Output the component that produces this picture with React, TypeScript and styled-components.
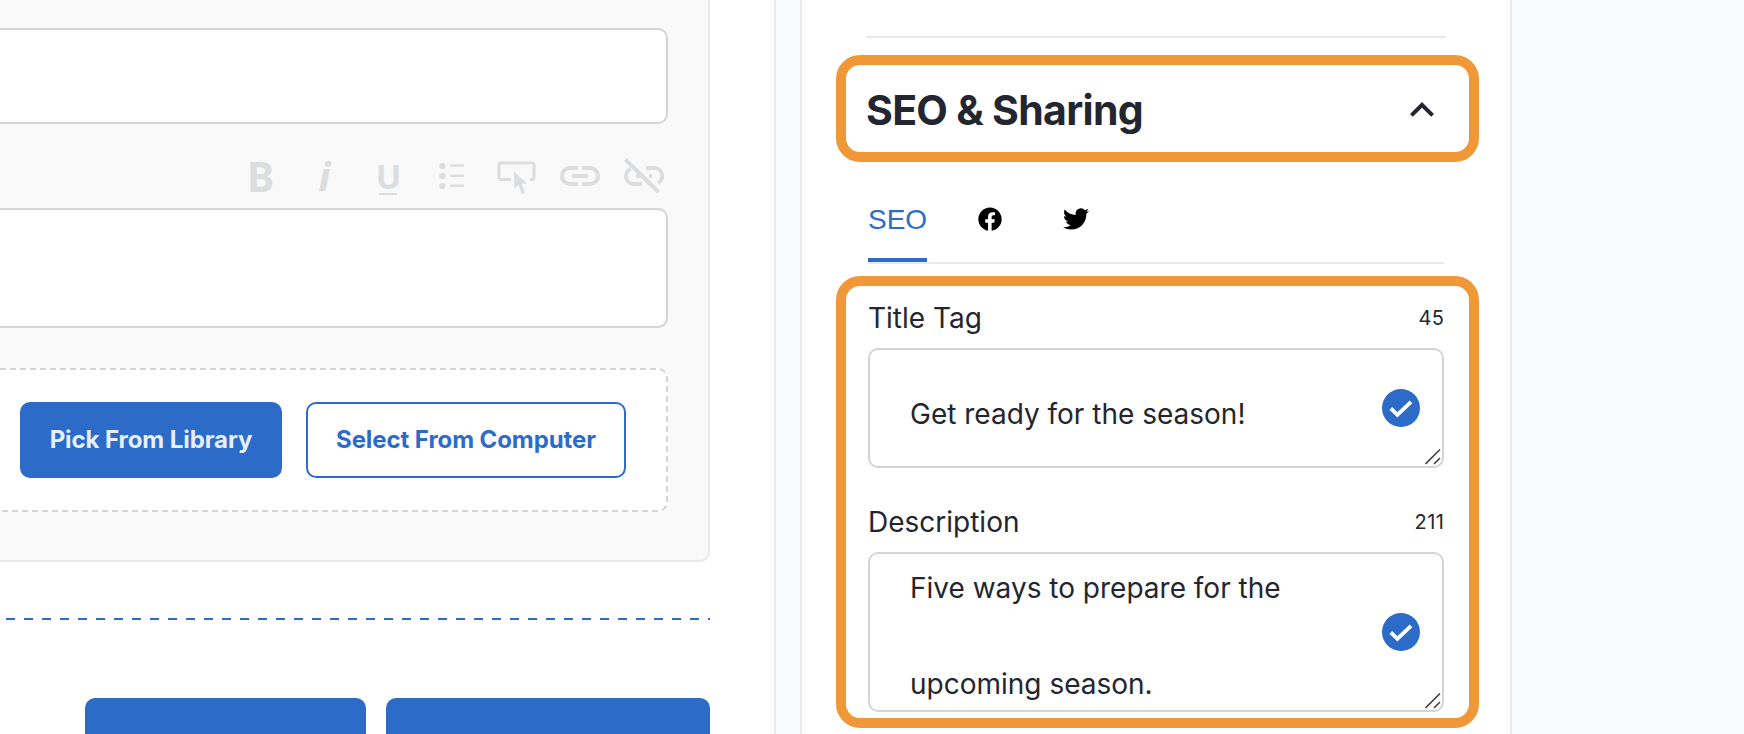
import type { ReactNode } from "react";
import styled, { createGlobalStyle } from "styled-components";

const blue = "#2d6bc9";
const ink = "#23262f";
const line = "#e9e9e9";
const border = "#d4d4d4";

const GlobalStyle = createGlobalStyle`
  * {
    box-sizing: border-box;
  }
  body {
    margin: 0;
    overflow: hidden;
    background: #fafbfd;
    color: ${ink};
    font-family: Inter, "Liberation Sans", sans-serif;
  }
`;

const Page = styled.div`
  display: flex;
  gap: 24px;
  width: 1744px;
  height: 734px;
  overflow: hidden;
`;

const EditorColumn = styled.main`
  flex: none;
  width: 776px;
  padding-right: 64px;
  background: #fff;
  border-right: 2px solid ${line};
`;

const BlockCard = styled.section`
  height: 562px;
  padding: 28px 40px 0 0;
  background: #f9f9f9;
  border: solid ${line};
  border-width: 0 2px 2px 0;
  border-bottom-right-radius: 10px;
`;

const Field = styled.div<{ $height: number }>`
  height: ${({ $height }) => $height}px;
  background: #fff;
  border: 2px solid ${border};
  border-left: 0;
  border-radius: 0 10px 10px 0;
`;

const Toolbar = styled.div`
  display: flex;
  align-items: center;
  justify-content: flex-end;
  gap: 24px;
  height: 84px;
  padding: 20px 4px 0 0;
  color: #dcdddf;
`;

const ToolButton = styled.span`
  display: flex;
  align-items: center;
  justify-content: center;
  width: 40px;
  height: 44px;
`;

const ToolLetter = styled(ToolButton)<{ $size: number; $italic?: boolean }>`
  padding-left: 1px;
  font-family: "Open Sans", sans-serif;
  font-size: ${({ $size }) => $size}px;
  font-style: ${({ $italic }) => ($italic ? "italic" : "normal")};
  font-weight: 700;
  line-height: 42px;
`;

const UnderlineLetter = styled.span`
  height: 37px;
  line-height: 36px;
  margin-top: 1px;
  background: linear-gradient(currentColor, currentColor) center bottom / 18px 2px no-repeat;
`;

const DropZone = styled.div`
  display: flex;
  gap: 24px;
  height: 144px;
  margin-top: 40px;
  padding: 32px 0 0 20px;
  background: #fff;
  border: 2px dashed ${border};
  border-left: 0;
  border-radius: 0 10px 10px 0;
`;

const Button = styled.button<{ $width: number; $outline?: boolean }>`
  flex: none;
  width: ${({ $width }) => $width}px;
  height: 76px;
  padding: 0 0 2px;
  border: 2px solid ${blue};
  border-radius: 10px;
  background: ${({ $outline }) => ($outline ? "#fff" : blue)};
  color: ${({ $outline }) => ($outline ? blue : "#e6effb")};
  font: 700 24px Inter, sans-serif;
  letter-spacing: -0.08px;
  white-space: nowrap;
`;

const DashedRule = styled.div`
  width: 710px;
  height: 2px;
  margin-top: 56px;
  background: repeating-linear-gradient(to right, transparent 0 6px, ${blue} 6px 15px, transparent 15px 18px);
`;

const Actions = styled.div`
  display: flex;
  justify-content: flex-end;
  gap: 20px;
  width: 710px;
  margin-top: 78px;
`;

const Sidebar = styled.aside`
  flex: none;
  width: 712px;
  padding: 36px 31px 0 34px;
  background: #fff;
  border: solid ${line};
  border-width: 0 2px;
`;

const Divider = styled.hr`
  height: 2px;
  margin: 0 33px 17px 30px;
  border: 0;
  background: ${line};
`;

const Highlight = styled.section<{ $height: number }>`
  height: ${({ $height }) => $height}px;
  border: 10px solid #f09837;
  border-radius: 24px;
`;

const PanelHeader = styled.div`
  display: flex;
  align-items: center;
  justify-content: space-between;
  height: 87px;
  padding: 2px 23px 0 20px;
`;

const PanelTitle = styled.h2`
  margin: 0;
  font-size: 41px;
  font-weight: 700;
  letter-spacing: -0.7px;
  line-height: 50px;
  white-space: nowrap;
`;

const Tabs = styled.nav`
  display: flex;
  height: 69px;
  margin: 33px 35px 12px 32px;
  border-bottom: 2px solid ${line};
`;

const Tab = styled.a<{ $active?: boolean }>`
  display: flex;
  justify-content: center;
  height: 67px;
  padding-top: 9px;
  border-bottom: 4px solid ${({ $active }) => ($active ? blue : "transparent")};
  color: ${({ $active }) => ($active ? blue : "#000")};
  font: 28px/32px "Liberation Sans", Arial, sans-serif;

  & + & {
    margin-left: 49px;
    padding-top: 10px;
  }
  & + & + & {
    margin-left: 59px;
    padding-top: 11px;
  }
`;

const SeoFields = styled.div`
  padding: 0 25px 0 22px;
`;

const FieldHead = styled.div`
  display: flex;
  align-items: center;
  justify-content: space-between;
  height: 62px;
  padding-top: 2px;
  font-size: 28px;
`;

const Counter = styled.span`
  margin-right: -0.5px;
  font-size: 20px;
  letter-spacing: 0.5px;
`;

const TextBox = styled.div<{ $height: number }>`
  position: relative;
  height: ${({ $height }) => $height}px;
  margin-bottom: 22px;
  padding-left: 40px;
  overflow: hidden;
  border: 2px solid ${border};
  border-radius: 10px;
  font-size: 28px;
  line-height: 96px;
`;

const TextValue = styled.p<{ $shift: number }>`
  width: 400px;
  margin: ${({ $shift }) => $shift}px 0 0;
`;

const CheckBadge = styled.svg`
  position: absolute;
  right: 22px;
  top: calc(50% - 19px);
`;

const ResizeGrip = styled.svg`
  position: absolute;
  right: 1px;
  bottom: 1px;
`;

function ToolIcon({ children }: { children: ReactNode }) {
  return (
    <ToolButton>
      <svg width="40" height="44" viewBox="0 0 40 44" fill="none" stroke="currentColor">
        {children}
      </svg>
    </ToolButton>
  );
}

function SeoTextBox({ height, shift, value }: { height: number; shift: number; value: string }) {
  return (
    <TextBox $height={height}>
      <TextValue $shift={shift}>{value}</TextValue>
      <CheckBadge width="38" height="38" viewBox="0 0 38 38">
        <circle cx="19" cy="19" r="19" fill={blue} />
        <path d="M8.8 19.4L15.4 25.8L29 12.9" fill="none" stroke="#fff" strokeWidth="3.9" />
      </CheckBadge>
      <ResizeGrip width="16" height="16" viewBox="0 0 16 16" stroke="#444" strokeWidth="1.6">
        <path d="M.5 15L15 .5M9 15l6-6" />
      </ResizeGrip>
    </TextBox>
  );
}

function App() {
  return (
    <>
      <GlobalStyle />
      <Page>
        <EditorColumn>
          <BlockCard>
            <Field $height={96} />
            <Toolbar>
              <ToolLetter $size={41}>B</ToolLetter>
              <ToolLetter $size={40} $italic>
                i
              </ToolLetter>
              <ToolLetter $size={34}>
                <UnderlineLetter>U</UnderlineLetter>
              </ToolLetter>
              <ToolIcon>
                <g fill="currentColor" stroke="none">
                  <circle cx="10.5" cy="12" r="3.1" />
                  <circle cx="10.5" cy="22" r="3.1" />
                  <circle cx="10.5" cy="32" r="3.1" />
                </g>
                <path d="M18 11.5h14M18 21.7h14M18 31.8h14" strokeWidth="2.4" />
              </ToolIcon>
              <ToolIcon>
                <path
                  d="M15 25.5H5a2 2 0 0 1-2-2V11a2 2 0 0 1 2-2h31a2 2 0 0 1 2 2v12.5a2 2 0 0 1-2 2h-2"
                  strokeWidth="3"
                />
                <path d="M18 17.5v17l4.7-3.5 3 9 3.6-1.5-3.7-8.5 5.4-.5z" fill="currentColor" stroke="none" />
              </ToolIcon>
              <ToolIcon>
                <path d="M18 14h-8a8 8 0 0 0 0 16h8M22 14h8a8 8 0 0 1 0 16h-8M12 22h16" strokeWidth="4" />
              </ToolIcon>
              <ToolIcon>
                <path d="M18 30h-8a8 8 0 0 1-3-15.4M22 14h8a8 8 0 0 1 4 15" strokeWidth="4" />
                <path d="M12 22h8M25 22h3" strokeWidth="4" />
                <path d="M1.5 5.5L34.5 38" strokeWidth="4" />
              </ToolIcon>
            </Toolbar>
            <Field $height={120} />
            <DropZone>
              <Button $width={262}>Pick From Library</Button>
              <Button $width={320} $outline>
                Select From Computer
              </Button>
            </DropZone>
          </BlockCard>
          <DashedRule />
          <Actions>
            <Button $width={281} />
            <Button $width={324} />
          </Actions>
        </EditorColumn>

        <Sidebar>
          <Divider />
          <Highlight $height={107}>
            <PanelHeader>
              <PanelTitle>SEO &amp; Sharing</PanelTitle>
              <svg width="48" height="48" viewBox="0 0 24 24" fill={ink}>
                <path d="M12 8l-6 6 1.41 1.41L12 10.83l4.59 4.58L18 14z" />
              </svg>
            </PanelHeader>
          </Highlight>
          <Tabs>
            <Tab $active>SEO</Tab>
            <Tab>
              <svg width="28" height="32" viewBox="0 0 24 27">
                <path d="M22 12c0-5.52-4.48-10-10-10S2 6.48 2 12c0 4.84 3.44 8.87 8.3 9.85V14.9H7.9V12h2.4V9.8c0-2.5 1.5-3.9 3.8-3.9 1.1 0 2.2.2 2.2.2v2.5H15c-1.2 0-1.6.75-1.6 1.5V12h2.7l-.45 2.9H13.4v6.98C18.3 21.12 22 17 22 12z" />
              </svg>
            </Tab>
            <Tab>
              <svg width="26" height="32" viewBox="0 0 24 29.5">
                <path d="M23.95 4.57a10 10 0 0 1-2.82.775 4.96 4.96 0 0 0 2.16-2.723c-.95.555-2.005.959-3.127 1.184a4.92 4.92 0 0 0-8.384 4.482C7.69 8.095 4.067 6.13 1.64 3.162a4.822 4.822 0 0 0-.666 2.475c0 1.71.87 3.213 2.188 4.096a4.904 4.904 0 0 1-2.228-.616v.06a4.923 4.923 0 0 0 3.946 4.827 4.996 4.996 0 0 1-2.212.085 4.936 4.936 0 0 0 4.604 3.417 9.867 9.867 0 0 1-6.102 2.105c-.39 0-.779-.023-1.17-.067a13.995 13.995 0 0 0 7.557 2.209c9.053 0 13.998-7.496 13.998-13.985 0-.21 0-.42-.015-.63A9.935 9.935 0 0 0 24 4.59z" />
              </svg>
            </Tab>
          </Tabs>
          <Highlight $height={452}>
            <SeoFields>
              <FieldHead>
                Title Tag
                <Counter>45</Counter>
              </FieldHead>
              <SeoTextBox height={120} shift={16} value="Get ready for the season!" />
              <FieldHead>
                Description
                <Counter>211</Counter>
              </FieldHead>
              <SeoTextBox height={160} shift={-14} value="Five ways to prepare for the upcoming season." />
            </SeoFields>
          </Highlight>
        </Sidebar>
      </Page>
    </>
  );
}

export default App;
